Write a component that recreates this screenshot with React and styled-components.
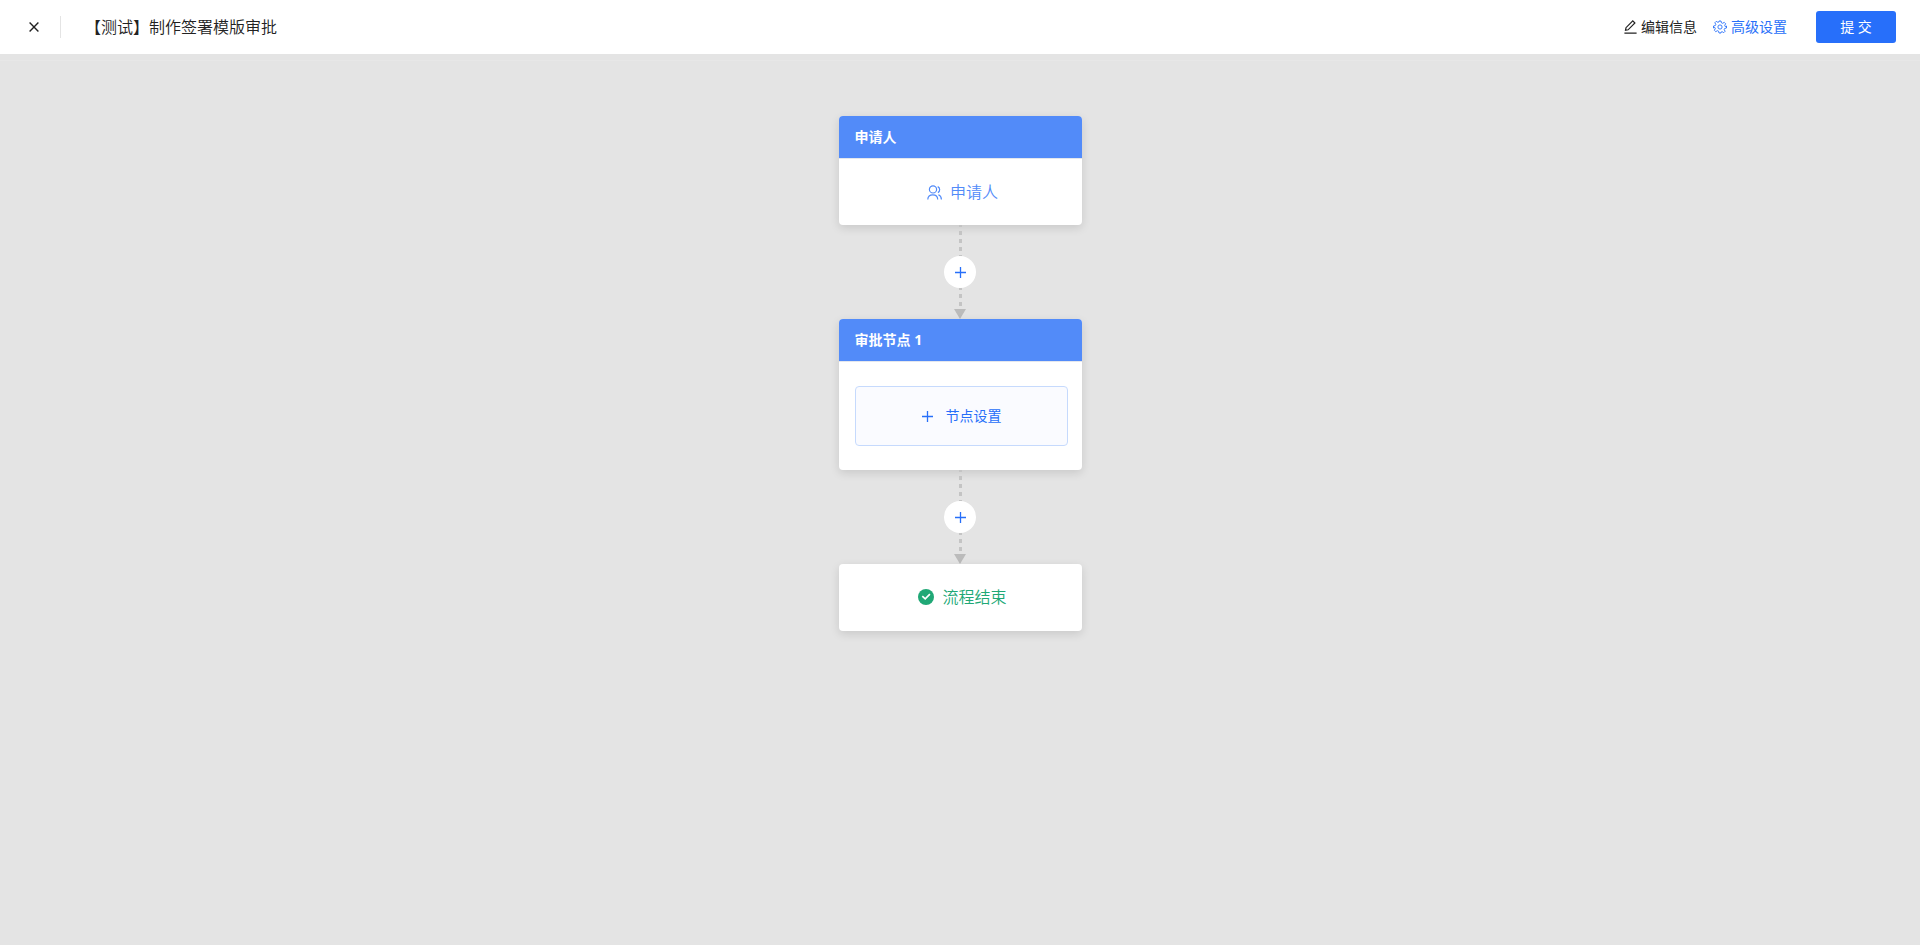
import styled, { createGlobalStyle } from 'styled-components';

const GlobalStyle = createGlobalStyle`
  * {
    box-sizing: border-box;
  }
  html,
  body,
  #root {
    height: 100%;
  }
  body {
    margin: 0;
    background: #e4e4e4;
    font-family: 'Noto Sans', 'Noto Sans CJK SC', sans-serif;
    font-size: 14px;
    line-height: 22px;
    color: #222;
  }
  button {
    font: inherit;
    cursor: pointer;
  }
`;

const Page = styled.div`
  min-height: 100%;
  display: flex;
  flex-direction: column;
`;

const Header = styled.header`
  display: flex;
  align-items: center;
  height: 54px;
  padding: 0 24px;
  background: #fff;
`;

const CloseButton = styled.button`
  display: flex;
  align-items: center;
  width: 36px;
  height: 22px;
  padding: 0 5px;
  border: 0;
  background: none;
  color: #222;
`;

const Title = styled.h1`
  flex: 1;
  margin: 0;
  padding-left: 24px;
  border-left: 1px solid #e4e4e4;
  font-size: 16px;
  font-weight: 350;
  line-height: 22px;
`;

const Actions = styled.div`
  display: flex;
  align-items: center;
  gap: 16px;
`;

const TextButton = styled.button`
  display: flex;
  align-items: center;
  gap: 4px;
  padding: 0;
  border: 0;
  background: none;
  color: ${({ $active }) => ($active ? '#276ff9' : '#222')};
`;

const SubmitButton = styled.button`
  width: 80px;
  height: 32px;
  margin-left: 13px;
  padding: 0;
  border: 0;
  border-radius: 3px;
  background: #276ffa;
  color: #fff;
`;

const Canvas = styled.main`
  flex: 1;
  display: flex;
  flex-direction: column;
  align-items: center;
  margin-top: 6px;
  padding: 55px 0 48px;
  border-top: 1px solid #e7e7e7;
`;

const Card = styled.section`
  width: 243px;
  min-height: 67px;
  border-radius: 4px;
  background: #fff;
  box-shadow: 0 3px 10px rgba(0, 0, 0, 0.12);
  overflow: hidden;
`;

const CardHeader = styled.h2`
  margin: 0;
  padding: 10px 16px;
  border-bottom: 1px solid #e4e7ed;
  background: #528bf9;
  background-clip: padding-box;
  color: #fff;
  font-size: 14px;
  font-weight: 700;
  line-height: 22px;
`;

const CardBody = styled.div`
  padding: 24px 14px 24px 16px;
`;

const Status = styled.div`
  display: flex;
  align-items: center;
  justify-content: center;
  gap: 8px;
  height: 66px;
  padding-left: 5px;
  color: ${({ $color }) => $color};
  font-size: 16px;
  font-weight: 350;
`;

const SetupButton = styled.button`
  display: flex;
  align-items: center;
  justify-content: center;
  gap: 13px;
  width: 100%;
  height: 60px;
  padding: 0;
  border: 1px solid #c6dafd;
  border-radius: 4px;
  background: #fafbff;
  color: #276ff9;
`;

const Link = styled.div`
  display: flex;
  flex-direction: column;
  align-items: center;
  width: 32px;
`;

const Dashes = styled.i`
  width: 3px;
  height: ${({ $height }) => $height}px;
  background: repeating-linear-gradient(#c4c4c4 0 2px, transparent 2px 6px, #c4c4c4 6px 8px);
`;

const Arrow = styled.i`
  border: solid transparent;
  border-width: 10px 6px 0;
  border-top-color: #bbb;
`;

const AddButton = styled.button`
  display: flex;
  align-items: center;
  justify-content: center;
  width: 32px;
  height: 32px;
  padding: 0;
  border: 0;
  border-radius: 50%;
  background: #fff;
  color: #276ff9;
`;

const Icon = styled.svg`
  display: block;
  flex-shrink: 0;
  fill: none;
  stroke: currentColor;
`;

const CloseIcon = () => (
  <Icon width="10" height="10" viewBox="0 0 10 10" strokeWidth="1.4" aria-hidden="true">
    <path d="M.6.6l8.8 8.8M9.4.6L.6 9.4" />
  </Icon>
);

const PlusIcon = () => (
  <Icon width="12" height="12" viewBox="0 0 12 12" strokeWidth="1.3" aria-hidden="true">
    <path d="M6.5 1v11M1 6.5h11" />
  </Icon>
);

const EditIcon = () => (
  <Icon width="13" height="14" viewBox="0 0 13 14" strokeWidth="1.2" aria-hidden="true">
    <path d="M1.5 10.3l.5-2.6L8.8.9l2.1 2.1-6.8 6.8zM.4 13.2h12.2" />
  </Icon>
);

const GearIcon = () => (
  <Icon width="14" height="14" viewBox="0 0 28 28" strokeWidth="1.8" strokeLinejoin="round" aria-hidden="true">
    <circle cx="14" cy="14" r="4.2" />
    <path d="M12 2h4l.9 3.6 2.4 1 3.2-1.9 2.8 2.8-1.9 3.2 1 2.4L27 12v4l-3.6.9-1 2.4 1.9 3.2-2.8 2.8-3.2-1.9-2.4 1L16 26h-4l-.9-3.6-2.4-1-3.2 1.9-2.8-2.8 1.9-3.2-1-2.4L1 16v-4l3.6-.9 1-2.4-1.9-3.2 2.8-2.8 3.2 1.9 2.4-1z" />
  </Icon>
);

const UsersIcon = () => (
  <Icon width="15" height="15" viewBox="0 0 15 15" strokeWidth="1.2" aria-hidden="true">
    <circle cx="6" cy="4.4" r="3.6" />
    <path d="M.8 14.5c0-3 2-4.7 4.9-4.7s5 1.7 5 4.7M10.7 1.6c2.5 1 2.7 4.7.2 6M11.4 9.8c1.9.8 3 2.3 3 4.7" />
  </Icon>
);

const DoneIcon = () => (
  <Icon width="16" height="16" viewBox="0 0 16 16" aria-hidden="true">
    <circle cx="8" cy="8" r="8" fill="currentColor" stroke="none" />
    <path d="M4.3 7.2l2.9 2.7 4.7-4.7" stroke="#fff" strokeWidth="1.7" />
  </Icon>
);

function Connector() {
  return (
    <Link>
      <Dashes $height={31} />
      <AddButton type="button" aria-label="添加节点">
        <PlusIcon />
      </AddButton>
      <Dashes $height={21} />
      <Arrow />
    </Link>
  );
}

export default function App() {
  return (
    <Page>
      <GlobalStyle />
      <Header>
        <CloseButton type="button" aria-label="关闭">
          <CloseIcon />
        </CloseButton>
        <Title>【测试】制作签署模版审批</Title>
        <Actions>
          <TextButton type="button">
            <EditIcon />
            编辑信息
          </TextButton>
          <TextButton type="button" $active>
            <GearIcon />
            高级设置
          </TextButton>
          <SubmitButton type="button">提 交</SubmitButton>
        </Actions>
      </Header>
      <Canvas>
        <Card>
          <CardHeader>申请人</CardHeader>
          <Status $color="#528bf9">
            <UsersIcon />
            申请人
          </Status>
        </Card>
        <Connector />
        <Card>
          <CardHeader>审批节点 1</CardHeader>
          <CardBody>
            <SetupButton type="button">
              <PlusIcon />
              节点设置
            </SetupButton>
          </CardBody>
        </Card>
        <Connector />
        <Card>
          <Status $color="#20a876">
            <DoneIcon />
            流程结束
          </Status>
        </Card>
      </Canvas>
    </Page>
  );
}
